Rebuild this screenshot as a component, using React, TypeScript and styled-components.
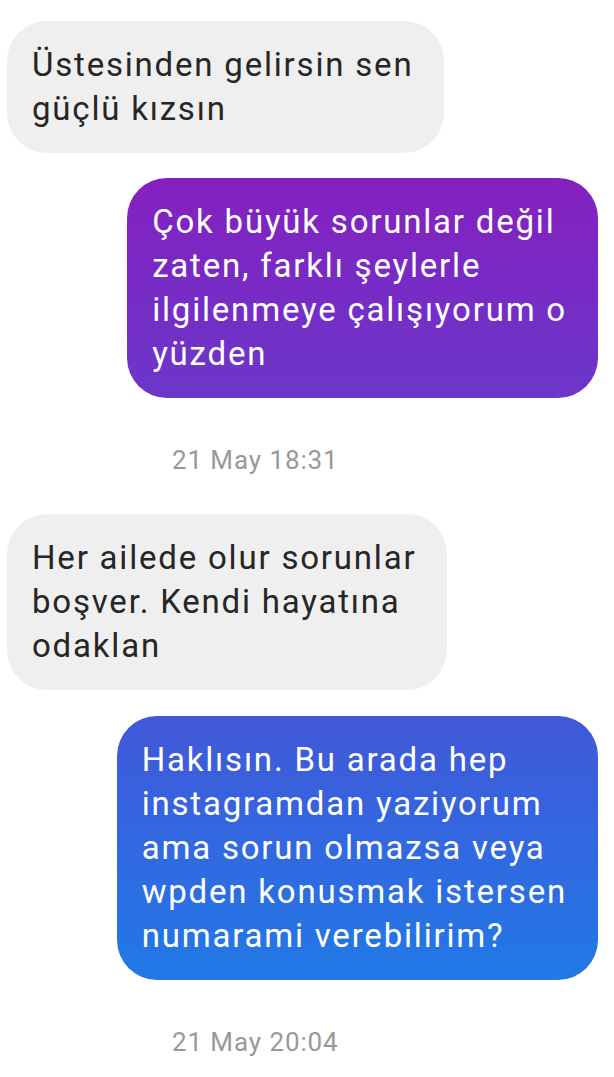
import React from 'react';
import styled, { createGlobalStyle } from 'styled-components';

const GlobalStyle = createGlobalStyle`
  html, body {
    margin: 0;
    padding: 0;
    background: #ffffff;
  }
  body {
    font-family: Roboto, "Noto Sans", "Liberation Sans", sans-serif;
    -webkit-font-smoothing: antialiased;
  }
`;

const Thread = styled.div`
  display: flex;
  flex-direction: column;
  width: 614px;
  padding: 21px 16px 0 7px;
  box-sizing: border-box;
`;

const Row = styled.div<{ $mine?: boolean; $gap: number }>`
  display: flex;
  justify-content: ${(p) => (p.$mine ? 'flex-end' : 'flex-start')};
  margin-top: ${(p) => p.$gap}px;
`;

const Bubble = styled.div<{ $from?: string; $to?: string }>`
  padding: 22px 31px 22px 25px;
  border-radius: 40px;
  font-size: 33px;
  letter-spacing: 1.8px;
  line-height: 44px;
  white-space: pre-line;
  color: ${(p) => (p.$from ? '#ffffff' : '#262626')};
  background: ${(p) =>
    p.$from ? `linear-gradient(180deg, ${p.$from} 0%, ${p.$to} 100%)` : '#efefef'};
`;

const Stamp = styled.div<{ $gap: number }>`
  margin-top: ${(p) => p.$gap}px;
  padding-left: 165px;
  font-size: 26px;
  letter-spacing: 0.9px;
  line-height: 32px;
  color: #999999;
`;

type Msg =
  | { kind: 'in'; text: string; gap: number }
  | { kind: 'out'; text: string; gap: number; from: string; to: string }
  | { kind: 'time'; text: string; gap: number };

const messages: Msg[] = [
  { kind: 'in', gap: 0, text: 'Üstesinden gelirsin sen\ngüçlü kızsın' },
  {
    kind: 'out',
    gap: 25,
    from: '#8420c0',
    to: '#6b37c9',
    text: 'Çok büyük sorunlar değil\nzaten, farklı şeylerle\nilgilenmeye çalışıyorum o\nyüzden',
  },
  { kind: 'time', gap: 46, text: '21 May 18:31' },
  { kind: 'in', gap: 38, text: 'Her ailede olur sorunlar\nboşver. Kendi hayatına\nodaklan' },
  {
    kind: 'out',
    gap: 26,
    from: '#4258d9',
    to: '#2179e6',
    text: 'Haklısın. Bu arada hep\ninstagramdan yaziyorum\nama sorun olmazsa veya\nwpden konusmak istersen\nnumarami verebilirim?',
  },
  { kind: 'time', gap: 46, text: '21 May 20:04' },
];

const App: React.FC = () => {
  return (
    <>
      <GlobalStyle />
      <Thread>
        {messages.map((m, i) => {
          if (m.kind === 'time') {
            return (
              <Stamp key={i} $gap={m.gap}>
                {m.text}
              </Stamp>
            );
          }
          if (m.kind === 'out') {
            return (
              <Row key={i} $mine $gap={m.gap}>
                <Bubble $from={m.from} $to={m.to}>
                  {m.text}
                </Bubble>
              </Row>
            );
          }
          return (
            <Row key={i} $gap={m.gap}>
              <Bubble>{m.text}</Bubble>
            </Row>
          );
        })}
      </Thread>
    </>
  );
};

export default App;
